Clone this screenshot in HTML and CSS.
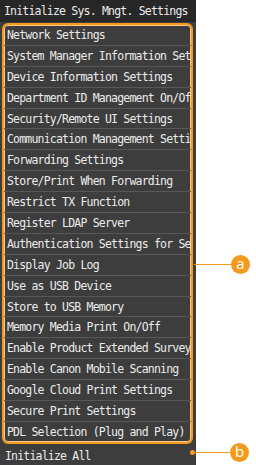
FILE: index.html
```html
<!doctype html>
<html lang="en">
<head>
    <meta charset="UTF-8" />
    <title>Initialize Sys. Mngt. Settings</title>
    <link rel="stylesheet" href="styles.css">
</head>
<body>

<div class="screen">
	<div class="title">Initialize Sys. Mngt. Settings</div>
	<div class="group">
		<div class="row">Network Settings</div>
		<div class="row">System Manager Information Settings</div>
		<div class="row">Device Information Settings</div>
		<div class="row">Department ID Management On/Off</div>
		<div class="row">Security/Remote UI Settings</div>
		<div class="row">Communication Management Settings</div>
		<div class="row">Forwarding Settings</div>
		<div class="row">Store/Print When Forwarding</div>
		<div class="row">Restrict TX Function</div>
		<div class="row">Register LDAP Server</div>
		<div class="row">Authentication Settings for Send</div>
		<div class="row">Display Job Log</div>
		<div class="row">Use as USB Device</div>
		<div class="row">Store to USB Memory</div>
		<div class="row">Memory Media Print On/Off</div>
		<div class="row">Enable Product Extended Survey</div>
		<div class="row">Enable Canon Mobile Scanning</div>
		<div class="row">Google Cloud Print Settings</div>
		<div class="row">Secure Print Settings</div>
		<div class="row last">PDL Selection (Plug and Play)</div>
	</div>
	<div class="row all">Initialize All</div>
</div>

<!-- callouts -->
<div class="callout callout-a">
	<span class="lead"></span>
	<span class="badge">a</span>
</div>
<div class="callout callout-b">
	<span class="dot"></span>
	<span class="lead"></span>
	<span class="badge">b</span>
</div>

</body>
</html>
```

FILE: styles.css
```css
body {
	margin: 0;
	background: #ffffff;
	font-family: 'DejaVu Sans Mono', 'Liberation Mono', monospace;
}
.screen {
	width: 196px;
	height: 465px;
	background: #3d3d3d;
	color: #ececec;
	font-size: 11.5px;
	letter-spacing: -0.8px;
}
.title {
	height: 22px;
	line-height: 23px;
	padding-left: 4px;
	background: #272727;
	white-space: nowrap;
	overflow: hidden;
}
.group {
	margin: 1px 3px 0 2px;
	border: 2px solid #f39a1e;
	border-radius: 6px;
	box-shadow: inset 0 0 0 1px #f7c98a;
	overflow: hidden;
}
.row {
	height: 19.9px;
	line-height: 20px;
	padding-left: 3px;
	border-bottom: 1px solid #575757;
	white-space: nowrap;
	overflow: hidden;
}
.row.last {
	border-bottom: none;
}
.row.all {
	height: 22px;
	line-height: 24px;
	padding-left: 5px;
	border-bottom: none;
}
.callout {
	position: absolute;
	display: flex;
	align-items: center;
}
.callout-a {
	left: 194px;
	top: 255px;
}
.callout-b {
	left: 190px;
	top: 443px;
}
.lead {
	width: 37px;
	height: 1px;
	background: #f39a1e;
}
.callout-b .lead {
	width: 35px;
}
.dot {
	width: 5px;
	height: 5px;
	border-radius: 50%;
	background: #f39a1e;
}
.badge {
	width: 19px;
	height: 19px;
	border-radius: 50%;
	background: #f39a1e;
	color: #ffffff;
	font-family: 'Open Sans', 'Liberation Sans', sans-serif;
	font-size: 15px;
	line-height: 17px;
	text-align: center;
}
```
